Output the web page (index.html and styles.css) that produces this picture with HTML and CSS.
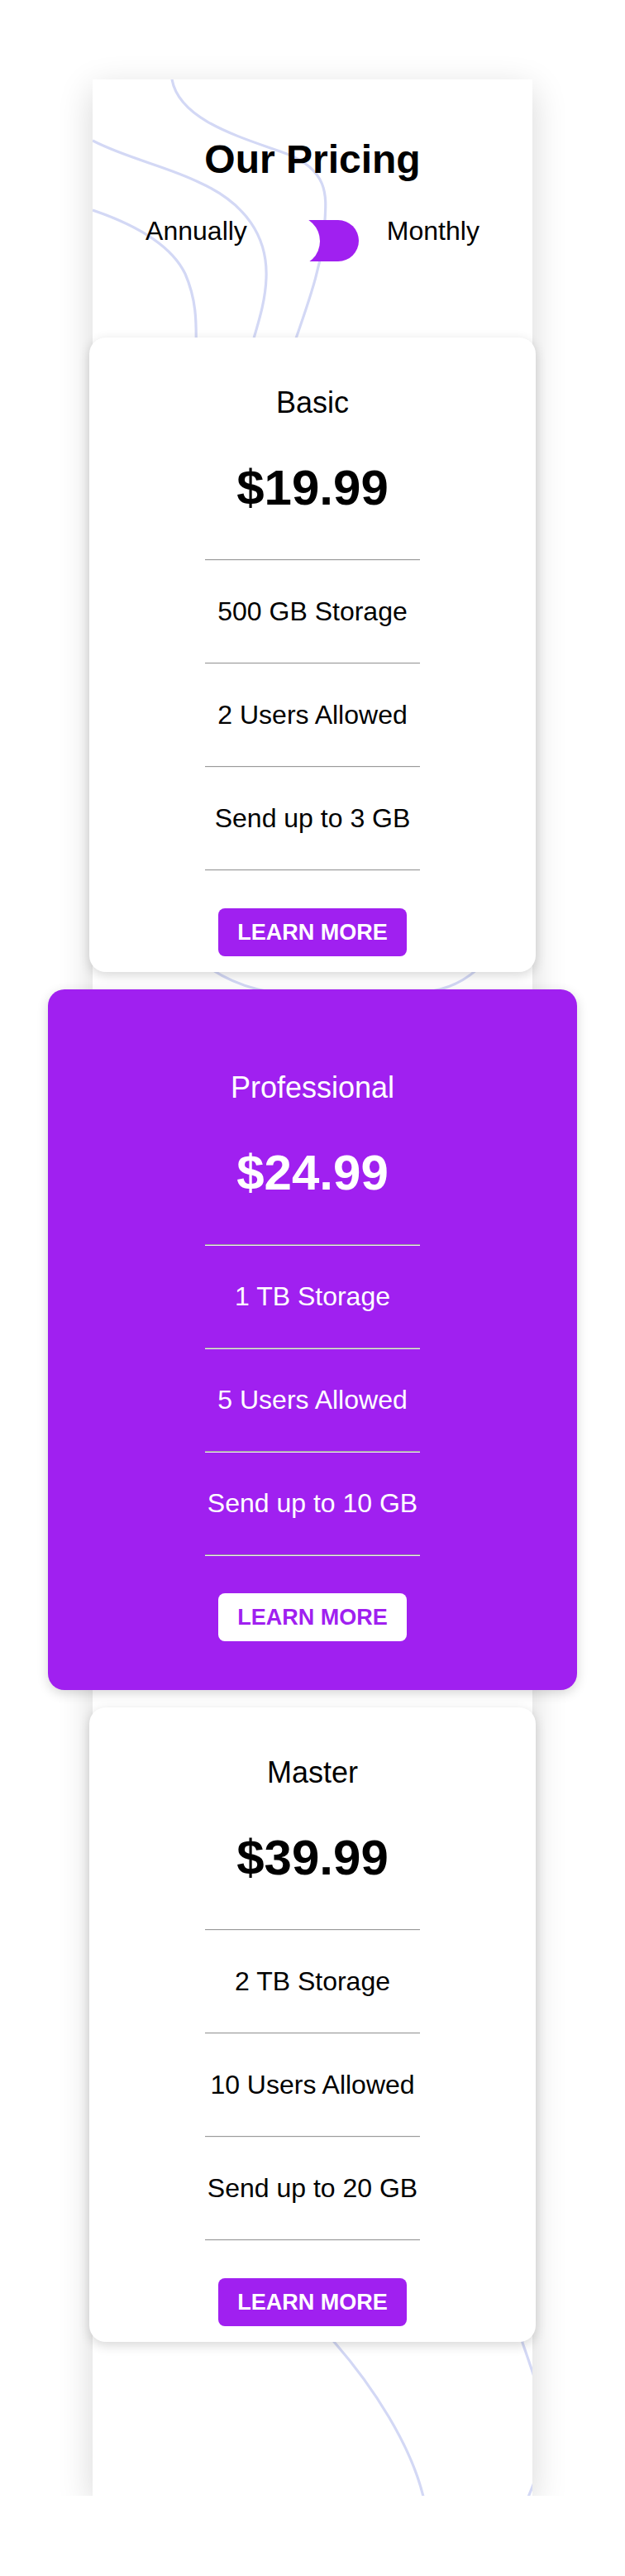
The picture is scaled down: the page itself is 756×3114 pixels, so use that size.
FILE: index.html
```html
<!DOCTYPE html>
<html lang="en">
<head>
<meta charset="utf-8">
<title>Our Pricing</title>
<link rel="stylesheet" href="styles.css">
</head>
<body>
<main class="pricing">
  <svg class="bg-lines" width="532" height="2922" viewBox="0 0 532 2922" aria-hidden="true">
    <path d="M96,0 C105,50 180,70 235,90 C285,110 283,140 281,170 C280,215 265,260 240,330" />
    <path d="M0,74 C40,95 90,105 130,125 C185,150 212,190 210,240 C209,270 200,295 190,330" />
    <path d="M0,158 C50,175 95,200 112,235 C125,265 126,290 125,330" />
    <path d="M40,900 C60,1010 120,1080 200,1100 C260,1114 360,1114 420,1100 C480,1085 520,1020 540,900" />
    <path d="M240,2680 C260,2700 280,2720 293,2736 C340,2790 385,2860 400,2922" />
    <path d="M505,2680 C512,2700 518,2720 520,2736 C525,2750 530,2765 535,2780" />
    <path d="M540,2890 C534,2905 530,2915 526,2925" />
  </svg>

  <header class="pricing-header">
    <h1 class="pricing-title">Our Pricing</h1>
    <div class="toggle-row">
      <span class="toggle-label">Annually</span>
      <span class="switch"><span class="switch-knob"></span></span>
      <span class="toggle-label">Monthly</span>
    </div>
  </header>

  <div class="cards">
    <section class="card">
      <h3 class="card-name">Basic</h3>
      <p class="card-price">$19.99</p>
      <hr class="divider">
      <p class="feature">500 GB Storage</p>
      <hr class="divider">
      <p class="feature">2 Users Allowed</p>
      <hr class="divider">
      <p class="feature">Send up to 3 GB</p>
      <hr class="divider">
      <a class="btn" href="#">LEARN MORE</a>
    </section>

    <section class="card card-featured">
      <h3 class="card-name">Professional</h3>
      <p class="card-price">$24.99</p>
      <hr class="divider">
      <p class="feature">1 TB Storage</p>
      <hr class="divider">
      <p class="feature">5 Users Allowed</p>
      <hr class="divider">
      <p class="feature">Send up to 10 GB</p>
      <hr class="divider">
      <a class="btn" href="#">LEARN MORE</a>
    </section>

    <section class="card">
      <h3 class="card-name">Master</h3>
      <p class="card-price">$39.99</p>
      <hr class="divider">
      <p class="feature">2 TB Storage</p>
      <hr class="divider">
      <p class="feature">10 Users Allowed</p>
      <hr class="divider">
      <p class="feature">Send up to 20 GB</p>
      <hr class="divider">
      <a class="btn" href="#">LEARN MORE</a>
    </section>
  </div>
</main>
</body>
</html>
```

FILE: styles.css
```css
html, body {
  margin: 0;
  padding: 0;
  background: #ffffff;
}

body {
  font-family: "Liberation Sans", Arial, Helvetica, sans-serif;
  color: #000;
  padding-top: 96px;
}

.pricing {
  position: relative;
  width: 532px;
  margin: 0 auto;
  padding-bottom: 186px;
  background: #ffffff;
  box-shadow: 0 12px 40px rgba(0, 0, 0, 0.16);
}

.bg-lines {
  position: absolute;
  top: 0;
  left: 0;
  overflow: hidden;
}

.bg-lines path {
  fill: none;
  stroke: #d3d8f5;
  stroke-width: 3.2;
}

.pricing-header {
  position: relative;
  height: 312px;
  box-sizing: border-box;
  padding-top: 69px;
  text-align: center;
}

.pricing-title {
  margin: 0;
  font-size: 48px;
  line-height: 56px;
  font-weight: 700;
}

.toggle-row {
  margin-top: 40px;
  display: flex;
  justify-content: center;
  align-items: flex-start;
}

.toggle-label {
  font-size: 32px;
  line-height: 37px;
}

.switch {
  position: relative;
  width: 100px;
  height: 50px;
  margin: 5px 34px 0 35px;
  border-radius: 25px;
  background: #a020f0;
}

.switch-knob {
  position: absolute;
  left: -8px;
  top: -5.5px;
  width: 61px;
  height: 61px;
  border-radius: 50%;
  background: #ffffff;
}

.cards {
  position: relative;
  display: flex;
  flex-direction: column;
  align-items: center;
  gap: 21px;
}

.card {
  flex: none;
  width: 540px;
  box-sizing: border-box;
  padding: 58px 0 19px;
  border-radius: 20px;
  background: #ffffff;
  text-align: center;
  box-shadow: 0 4px 14px rgba(0, 0, 0, 0.16);
}

.card-featured {
  width: 640px;
  padding: 98px 0 59px;
  background: #a020f0;
  color: #ffffff;
}

.card-name {
  margin: 0;
  font-size: 36px;
  line-height: 42px;
  font-weight: 400;
}

.card-price {
  margin: 47px 0 0;
  font-size: 60px;
  line-height: 70px;
  font-weight: 700;
}

.divider {
  width: 260px;
  height: 0;
  margin: 0 auto;
  border: 0;
  border-top: 1px solid #9a9a9a;
  border-bottom: 1px solid #eeeeee;
}

.card-price + .divider {
  margin-top: 51px;
}

.feature {
  margin: 0;
  padding: 43px 0;
  font-size: 32px;
  line-height: 37px;
}

.btn {
  display: block;
  width: 228px;
  height: 58px;
  margin: 45px auto 0;
  border-radius: 8px;
  background: #a020f0;
  color: #ffffff;
  font-size: 27px;
  line-height: 58px;
  font-weight: 700;
  text-decoration: none;
}

.card-featured .btn {
  background: #ffffff;
  color: #a020f0;
}
```
